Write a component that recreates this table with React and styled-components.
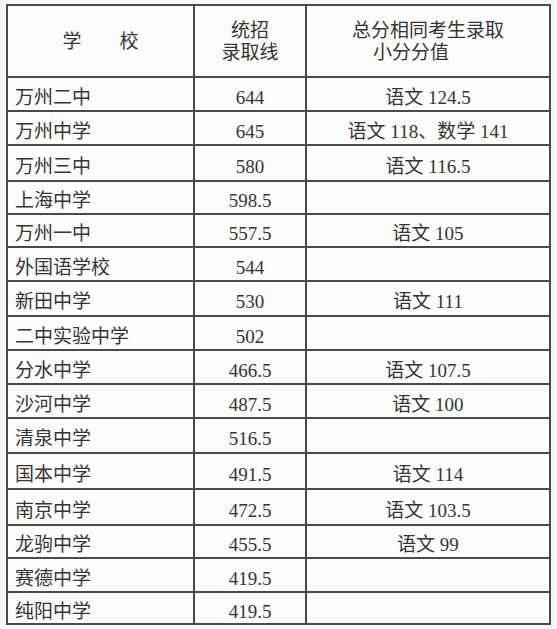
import React from "react";
import styled, { createGlobalStyle } from "styled-components";

const GlobalStyle = createGlobalStyle`
  body {
    margin: 0;
    background: #f7f7f7;
    font-family: "Liberation Serif", "Noto Sans CJK SC", serif;
    color: #353535;
  }
`;

const Sheet = styled.div`
  margin: 4px 0 0 6px;
  width: 543px;
  display: grid;
  grid-template-columns: 187px 112px 244px;
  grid-template-rows: 72px 34px 34px 36px 33px 33px 34px 35px 34px 34px 34px 35px 36px 36px 33px 34px 32px;
  border-top: 2px solid #4a4a4a;
  border-left: 2px solid #4a4a4a;
  background: #fcfcfc;
`;

const Cell = styled.div`
  box-sizing: border-box;
  border-right: 2px solid #4a4a4a;
  border-bottom: 2px solid #4a4a4a;
  display: flex;
  align-items: center;
  justify-content: ${(p) => (p.align === "left" ? "flex-start" : "center")};
  padding: 7px 0 0 ${(p) => (p.align === "left" ? "7px" : "0")};
  font-size: 19px;
  line-height: 22px;
  white-space: nowrap;
`;

const HeadCell = styled(Cell)`
  padding-top: 2px;
  flex-direction: column;
  align-items: ${(p) => (p.align === "left" ? "flex-start" : "center")};
  justify-content: center;
  padding-left: ${(p) => (p.align === "left" ? "45px" : "0")};
`;

const Line = styled.span`
  display: block;
  padding-left: ${(p) => p.indent || 0}px;
`;

const rows = [
  ["万州二中", "644", "语文 124.5"],
  ["万州中学", "645", "语文 118、数学 141"],
  ["万州三中", "580", "语文 116.5"],
  ["上海中学", "598.5", ""],
  ["万州一中", "557.5", "语文 105"],
  ["外国语学校", "544", ""],
  ["新田中学", "530", "语文 111"],
  ["二中实验中学", "502", ""],
  ["分水中学", "466.5", "语文 107.5"],
  ["沙河中学", "487.5", "语文 100"],
  ["清泉中学", "516.5", ""],
  ["国本中学", "491.5", "语文 114"],
  ["南京中学", "472.5", "语文 103.5"],
  ["龙驹中学", "455.5", "语文 99"],
  ["赛德中学", "419.5", ""],
  ["纯阳中学", "419.5", ""],
];

export default function App() {
  return (
    <>
      <GlobalStyle />
      <Sheet>
        <HeadCell>学　　校</HeadCell>
        <HeadCell>
          <Line>统招</Line>
          <Line>录取线</Line>
        </HeadCell>
        <HeadCell align="left">
          <Line>总分相同考生录取</Line>
          <Line indent={21}>小分分值</Line>
        </HeadCell>
        {rows.map(([school, line, extra]) => (
          <React.Fragment key={school}>
            <Cell align="left">{school}</Cell>
            <Cell>{line}</Cell>
            <Cell>{extra}</Cell>
          </React.Fragment>
        ))}
      </Sheet>
    </>
  );
}
